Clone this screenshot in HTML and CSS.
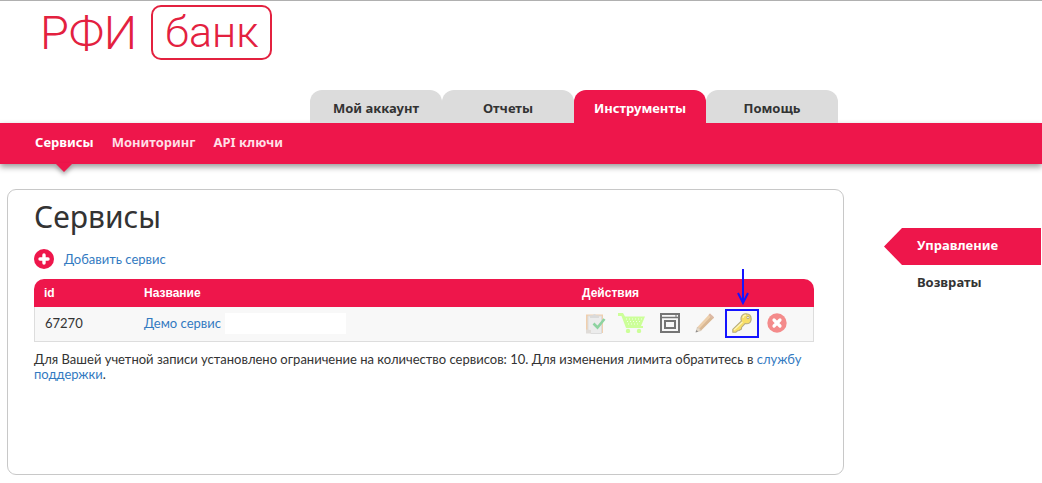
FILE: index.html
```html
<!DOCTYPE html>
<html lang="ru">
<head>
<meta charset="utf-8">
<meta name="viewport" content="width=device-width, initial-scale=1">
<title>Сервисы — РФИ банк</title>
<link rel="stylesheet" href="styles.css">
</head>
<body>
<header class="header">
  <a class="logo" href="#"><span class="logo-name">РФИ</span><span class="logo-box">банк</span></a>
  <nav class="tabs">
    <a class="tab" href="#">Мой аккаунт</a>
    <a class="tab" href="#">Отчеты</a>
    <a class="tab tab-active" href="#">Инструменты</a>
    <a class="tab" href="#">Помощь</a>
  </nav>
</header>
<nav class="subnav">
  <a class="subnav-link subnav-active" href="#">Сервисы
    <svg class="subnav-arrow" width="18" height="9" viewBox="0 0 18 9"><path d="M0 0H18L9 9Z" fill="#ee164b"/></svg></a>
  <a class="subnav-link" href="#">Мониторинг</a>
  <a class="subnav-link" href="#">API ключи</a>
</nav>
<div class="content">
  <main class="card">
    <h1 class="title">Сервисы</h1>
    <a class="add" href="#">
      <svg width="20" height="20" viewBox="0 0 20 20"><circle cx="10" cy="10" r="10" fill="#ee164b"/><path d="M10 6V14M6 10H14" stroke="#fff" stroke-width="3.4" stroke-linecap="round"/></svg>
      <span>Добавить сервис</span>
    </a>
    <table class="services">
      <thead>
        <tr><th class="col-id">id</th><th>Название</th><th class="col-actions">Действия</th></tr>
      </thead>
      <tbody>
        <tr>
          <td>67270</td>
          <td><div class="name"><a class="link" href="#">Демо сервис</a><span class="blank"></span></div></td>
          <td>
            <div class="actions">
              <button class="action action-order" type="button" aria-label="Заказ">
                <svg width="20" height="21" viewBox="0 0 20 21"><path d="M0 1.500H17V20H0Z" fill="#f0cfae"/><path d="M2 3H15.500V20.500H5L2 17Z" fill="#ececec" stroke="#dcdcdc"/><path d="M4 5V2.500H6.500Q8.500-.5 10.500 2.500H13V5Z" fill="#dadada"/><path d="M0 16.500L5 17V20.500H0Z" fill="#e0dcd8"/><path d="M7.500 10.500L11.500 14.500L18.500 6" fill="none" stroke="#8ed3a0" stroke-width="2.600"/></svg>
              </button>
              <button class="action action-cart" type="button" aria-label="Корзина">
                <svg width="27" height="20" viewBox="0 0 27 20" fill="#ccff99"><path d="M0 0H5L7 3.500H27L23 13H25V15H8L3.500 3H0Z"/><circle cx="10" cy="18" r="2.200"/><circle cx="21" cy="18" r="2.200"/><path d="M8 6H24M9 8.500H23M10 11H22" stroke="#f2ffe6" stroke-dasharray="1 2"/></svg>
              </button>
              <button class="action action-page" type="button" aria-label="Страница">
                <svg width="20" height="20" viewBox="0 0 20 20" fill="none" stroke="#757575"><rect x="1" y="1" width="18" height="18" stroke-width="2"/><path d="M1 4.500H19" stroke-width="1.500"/><path d="M16 1V4" stroke-width="1"/><rect x="5" y="8" width="10" height="7" stroke-width="2"/></svg>
              </button>
              <button class="action action-edit" type="button" aria-label="Изменить">
                <svg width="20" height="20" viewBox="0 0 20 20"><path d="M15 .5L19 4.500L6 17.500L2.500 14Z" fill="#edcfac"/><path d="M17 2.500L19 4.500L6 17.500L4.500 15.500Z" fill="#d9b894"/><path d="M15 .5L19 4.500L17.500 6L13.500 2Z" fill="#dcb9a6"/><path d="M2.500 14L6 17.500L1 19Z" fill="#e8dccb" stroke="#c9bba8" stroke-width=".6"/><path d="M1.500 17L3.200 18.400L.5 19.500Z" fill="#8d8d8d"/></svg>
              </button>
              <button class="action action-key" type="button" aria-label="Ключ">
                <svg width="20" height="20" viewBox="0 0 20 20"><path d="M9 5Q10 .8 14 .8Q19.200 1 19.200 6Q19 10.500 15 10.800L13 10.600L9.500 14.500V16L7 17.500L5.500 17.800L4 19.200H.8V16.300L9.500 8Q8.800 7 9 5Z" fill="#f8de66" stroke="#b5ac80" stroke-width="1.100" stroke-linejoin="round"/><path d="M11 5Q11.500 2.200 14 2.200M2 17L10.500 9" fill="none" stroke="#fff6b8" stroke-width="1.200"/><circle cx="16" cy="4.500" r="1.200" fill="#fff" stroke="#b5ac80"/></svg>
                <svg class="pointer" width="12" height="36" viewBox="0 0 12 36" fill="none" stroke="#1414ff" stroke-width="2"><path d="M6 0V34M1 24L6 34L11 24"/></svg>
              </button>
              <button class="action action-delete" type="button" aria-label="Удалить">
                <svg width="20" height="20" viewBox="0 0 20 20"><circle cx="10" cy="10" r="9.700" fill="#f48b8b"/><path d="M7 7L13 13M13 7L7 13" stroke="#fff" stroke-width="3.200" stroke-linecap="round"/></svg>
              </button>
            </div>
          </td>
        </tr>
      </tbody>
    </table>
    <p class="note">Для Вашей учетной записи установлено ограничение на количество сервисов: 10. Для изменения лимита обратитесь в <a class="link" href="#">службу поддержки</a>.</p>
  </main>
  <aside class="side">
    <a class="side-link side-active" href="#">Управление</a>
    <a class="side-link" href="#">Возвраты</a>
  </aside>
</div>
</body>
</html>
```
FILE: styles.css
```css
* { box-sizing: border-box; }
body {
  margin: 0;
  background: #fff;
  color: #333;
  font: 13px/15px "Noto Sans", "Open Sans", sans-serif;
}
a { text-decoration: none; }
.header {
  min-height: 123px;
  border-top: 1px solid #b0b0b0;
  display: flex;
  flex-direction: column;
  justify-content: space-between;
}
.logo {
  display: flex;
  align-items: center;
  gap: 14px;
  margin: 4px 0 0 40px;
  color: #e3213f;
  font: 300 47px/52px Roboto, sans-serif;
}
.logo-box {
  height: 55px;
  padding: 0 12px;
  border: 2px solid #e3213f;
  border-radius: 10px;
  font-size: 43px;
  line-height: 50px;
}
.tabs { display: flex; padding-left: 310px; }
.tab {
  width: 132px;
  height: 33px;
  border-radius: 12px 12px 0 0;
  background: #dcdcdc;
  color: #333;
  font-weight: 700;
  line-height: 36px;
  text-align: center;
}
.tab-active { background: #ee164b; color: #fff; }
.subnav {
  display: flex;
  gap: 18px;
  height: 41px;
  padding-left: 35px;
  background: #ee164b;
  box-shadow: 0 3px 6px rgba(0, 0, 0, .4);
}
.subnav-link {
  position: relative;
  color: #ffdfe6;
  font-weight: 700;
  line-height: 39px;
}
.subnav-active { color: #fff; }
.subnav-arrow {
  position: absolute;
  top: 40px;
  left: 50%;
  margin-left: -9px;
  filter: drop-shadow(0 3px 2px rgba(0, 0, 0, .3));
}
.content {
  display: grid;
  grid-template-columns: 1fr 157px;
  gap: 40px;
  padding: 25px 1px 8px 7px;
}
.card {
  min-height: 286px;
  padding: 7px 29px 20px 26px;
  border: 1px solid #c8c8c8;
  border-radius: 9px;
  font-family: Lato, "Noto Sans", sans-serif;
}
.title {
  margin: 0;
  font-family: "Noto Sans", sans-serif;
  font-size: 30px;
  font-weight: 400;
  line-height: 40px;
}
.add {
  display: flex;
  align-items: center;
  gap: 10px;
  margin: 12px 0 10px;
  color: #337ac1;
}
.link { color: #337ac1; }
.services {
  width: 100%;
  border-collapse: separate;
  border-spacing: 0;
  table-layout: fixed;
}
.services th {
  height: 28px;
  padding: 0 10px;
  background: #ee164b;
  color: #fff;
  font: 700 12px/15px "Liberation Sans", sans-serif;
  text-align: left;
}
.services th:first-child { border-top-left-radius: 10px; }
.services th:last-child { border-top-right-radius: 10px; }
.col-id { width: 100px; }
.col-actions { width: 242px; }
.services td {
  height: 35px;
  padding: 0 10px 2px;
  background: #f8f8f8;
  border-bottom: 1px solid #ddd;
}
.services td:first-child { border-left: 1px solid #ddd; }
.services td:last-child { border-right: 1px solid #ddd; }
.name { display: flex; align-items: center; gap: 4px; }
.blank { width: 121px; height: 21px; background: #fff; }
.actions { display: flex; align-items: center; }
.action {
  position: relative;
  display: flex;
  align-items: center;
  justify-content: center;
  padding: 0;
  border: 0;
  background: none;
}
.action-order { margin-left: 4px; }
.action-cart { margin-left: 12px; }
.action-page { margin-left: 15px; }
.action-edit { margin-left: 15px; }
.action-key {
  width: 34px;
  height: 29px;
  margin-left: 10px;
  border: 2px solid #1414ff;
}
.action-delete { margin-left: 8px; }
.pointer { position: absolute; bottom: 31px; left: 10px; }
.note { margin: 10px 0 0; }
.side { padding-top: 39px; }
.side-link {
  display: block;
  padding-left: 33px;
  color: #333;
  font-weight: 700;
  line-height: 35px;
}
.side-active {
  height: 37px;
  background: #ee164b;
  color: #fff;
  clip-path: polygon(0 50%, 18px 0, 100% 0, 100% 100%, 18px 100%);
}
```
